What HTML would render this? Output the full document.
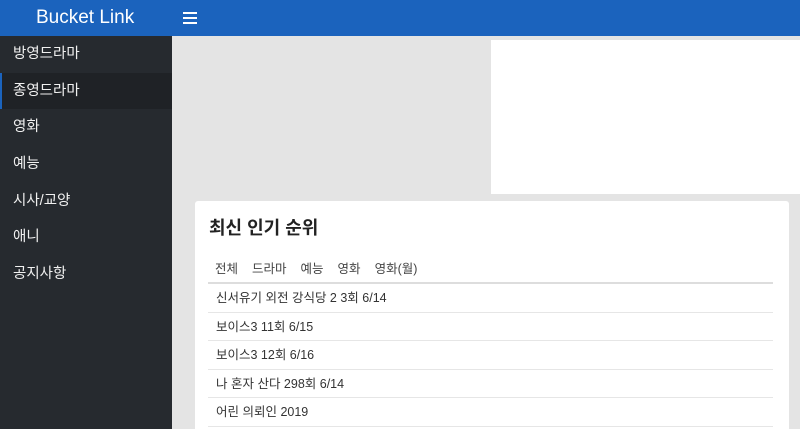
<!DOCTYPE html>
<html><head><meta charset="utf-8"><style>
*{margin:0;padding:0;box-sizing:border-box}
html,body{width:800px;height:429px;overflow:hidden}
body{background:#e4e4e4;font-family:"Liberation Sans","Noto Sans CJK KR",sans-serif;position:relative}
.hdr{position:absolute;left:0;top:0;width:800px;height:36px;background:#1b63bd}
.logo{position:absolute;left:36px;top:6px;color:#fff;font-size:19px;line-height:24px}
.burger{position:absolute;left:183px;top:12px;width:14px}
.burger i{display:block;height:2px;background:#fff;margin-bottom:3px}
.side{position:absolute;left:0;top:36px;width:172px;height:393px;background:#262a2f}
.side div{height:36.7px;line-height:36px;padding-left:13px;color:#f0f0f0;font-size:14.5px}
.side .act{background:#1f2226;border-left:2px solid #1b63bd;padding-left:11px}
.ad{position:absolute;left:491px;top:40px;width:309px;height:154px;background:#fff}
.card{position:absolute;left:195px;top:201px;width:594px;height:228px;background:#fff;border-radius:3px 3px 0 0;overflow:hidden}
.card h2{position:absolute;left:14px;top:13px;font-size:18px;color:#222;font-weight:bold}
.tabs{position:absolute;left:20px;top:57px;font-size:12.5px;color:#444}
.tabs span{margin-right:14px}
.list{position:absolute;left:13px;top:81px;width:565px;border-top:2px solid #ddd}
.list div{height:28.6px;line-height:28px;padding-left:8px;font-size:12.5px;color:#333;border-bottom:1px solid #e6e6e6}
</style></head><body>
<div class="hdr"><div class="logo">Bucket Link</div><div class="burger"><i></i><i></i><i></i></div></div>
<div class="side">
<div>방영드라마</div><div class="act">종영드라마</div><div>영화</div><div>예능</div><div>시사/교양</div><div>애니</div><div>공지사항</div>
</div>
<div class="ad"></div>
<div class="card">
<h2>최신 인기 순위</h2>
<div class="tabs"><span>전체</span><span>드라마</span><span>예능</span><span>영화</span><span>영화(월)</span></div>
<div class="list">
<div>신서유기 외전 강식당 2 3회 6/14</div>
<div>보이스3 11회 6/15</div>
<div>보이스3 12회 6/16</div>
<div>나 혼자 산다 298회 6/14</div>
<div>어린 의뢰인 2019</div>
</div>
</div>
</body></html>
